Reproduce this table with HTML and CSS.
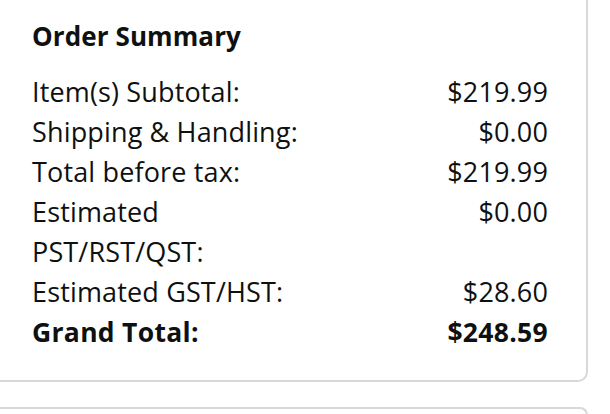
FILE: index.html
```html
<!DOCTYPE html>
<html>
<head>
<meta charset="utf-8">
<link rel="stylesheet" href="styles.css">
</head>
<body>
<section class="card summary">
  <h2 class="title">Order Summary</h2>
  <div class="rows">
    <div class="row"><span class="label">Item(s) Subtotal:</span><span class="value">$219.99</span></div>
    <div class="row"><span class="label">Shipping &amp; Handling:</span><span class="value">$0.00</span></div>
    <div class="row"><span class="label">Total before tax:</span><span class="value">$219.99</span></div>
    <div class="row"><span class="label">Estimated PST/RST/QST:</span><span class="value">$0.00</span></div>
    <div class="row"><span class="label">Estimated GST/HST:</span><span class="value">$28.60</span></div>
    <div class="row total"><span class="label">Grand Total:</span><span class="value">$248.59</span></div>
  </div>
</section>
<section class="card next"></section>
</body>
</html>
```

FILE: styles.css
```css
html, body {
  margin: 0;
  padding: 0;
  background: #ffffff;
}
body {
  font-family: "Open Sans", "Noto Sans", sans-serif;
  color: #0f1111;
  overflow: hidden;
  height: 414px;
}
.card {
  box-sizing: border-box;
  width: 598px;
  border: 2px solid #d8d8d8;
  border-radius: 10px;
  background: #fff;
}
.summary {
  margin: -10px 0 0 -10px;
  padding: 28px 38px 28px 40px;
}
.title {
  margin: 0 0 20px 0;
  font-size: 26px;
  line-height: 32px;
  font-weight: 700;
  letter-spacing: 0.1px;
}
.rows {
  display: flex;
  flex-direction: column;
}
.row {
  display: flex;
  justify-content: space-between;
  align-items: flex-start;
  font-size: 27px;
  line-height: 40px;
  letter-spacing: 0.15px;
}
.label {
  max-width: 285px;
}
.value {
  text-align: right;
}
.total {
  font-weight: 700;
  font-size: 26.5px;
  letter-spacing: 0.3px;
}
.next {
  margin: 25px 0 0 -10px;
  height: 8px;
  border-bottom: none;
  border-radius: 10px 10px 0 0;
}
```
